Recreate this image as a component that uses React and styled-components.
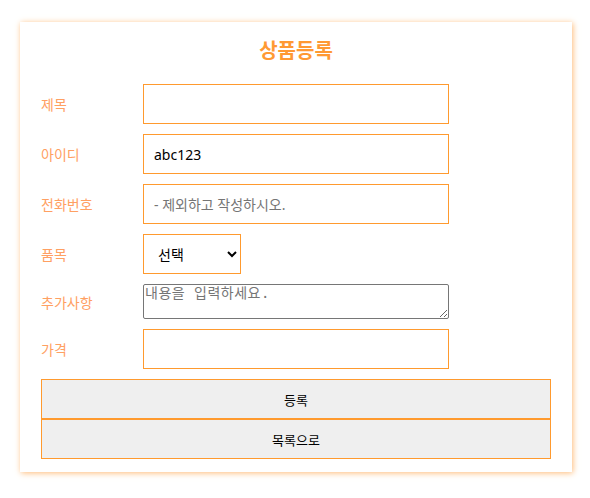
import React from "react";
import styled, { createGlobalStyle } from "styled-components";

const GlobalStyle = createGlobalStyle`
    body {
        margin: 0;
        background: #fff;
        font-family: "Noto Sans CJK KR", "Noto Sans", sans-serif;
    }
`;

/* 样式 */
const Page = styled.div`
    padding: 22px 18px 26px 20px;
`;

const Card = styled.form`
    box-sizing: border-box;
    width: 552px;
    padding: 16px 21px 13px;
    background: #fff;
    box-shadow: 1px 1px 6px #ffbb77;
`;

const Title = styled.h2`
    margin: 0 0 22px;
    height: 24px;
    line-height: 24px;
    font-size: 20px;
    font-weight: 700;
    text-align: center;
    color: #ff9933;
`;

const Fields = styled.div`
    display: grid;
    grid-template-columns: 102px 1fr;
    row-gap: 10px;
    align-items: center;
`;

const Label = styled.label`
    font-size: 14px;
    color: #ffa062;
`;

const Input = styled.input`
    box-sizing: border-box;
    width: 306px;
    height: 40px;
    padding: 0 10px;
    border: 1px solid #ff9a2e;
    border-radius: 0;
    outline: none;
    font-family: "Noto Sans", "Noto Sans CJK KR", sans-serif;
    font-size: 14px;
    color: #000;

    &::placeholder {
        color: #757575;
    }
`;

const Select = styled.select`
    box-sizing: border-box;
    width: 98px;
    height: 40px;
    padding: 0 8px 0 10px;
    border: 1px solid #ff9a2e;
    border-radius: 0;
    background: #fff;
    font-family: "Noto Sans CJK KR", sans-serif;
    font-size: 14px;
    color: #000;
`;

const TextArea = styled.textarea`
    box-sizing: border-box;
    width: 306px;
    height: 35px;
    margin: 0;
    padding: 0 1px;
    border: 1px solid #767676;
    border-radius: 2px;
    font-family: "DejaVu Sans Mono", "Noto Sans CJK KR", monospace;
    font-size: 14px;
    line-height: 16px;
    letter-spacing: 0.5px;

    &::placeholder {
        color: #757575;
    }
`;

const Buttons = styled.div`
    display: flex;
    flex-direction: column;
    margin-top: 10px;
`;

const Button = styled.button`
    height: 40px;
    border: 1px solid #ff9a2e;
    background: #efefef;
    font-family: "Noto Sans CJK KR", sans-serif;
    font-size: 13px;
    color: #000;
    cursor: pointer;
`;

const App = function App() {
    return <Page>
        <GlobalStyle />
        <Card onSubmit={e => e.preventDefault()}>
            <Title>상품등록</Title>
            <Fields>
                <Label>제목</Label>
                <Input type="text" />
                <Label>아이디</Label>
                <Input type="text" defaultValue="abc123" />
                <Label>전화번호</Label>
                <Input type="text" placeholder="- 제외하고 작성하시오." />
                <Label>품목</Label>
                <Select defaultValue="">
                    <option value="">선택</option>
                    <option value="a">의류</option>
                    <option value="b">전자</option>
                </Select>
                <Label>추가사항</Label>
                <TextArea placeholder="내용을 입력하세요." />
                <Label>가격</Label>
                <Input type="text" />
            </Fields>
            <Buttons>
                <Button type="submit">등록</Button>
                <Button type="button">목록으로</Button>
            </Buttons>
        </Card>
    </Page>;
};

export default App;
